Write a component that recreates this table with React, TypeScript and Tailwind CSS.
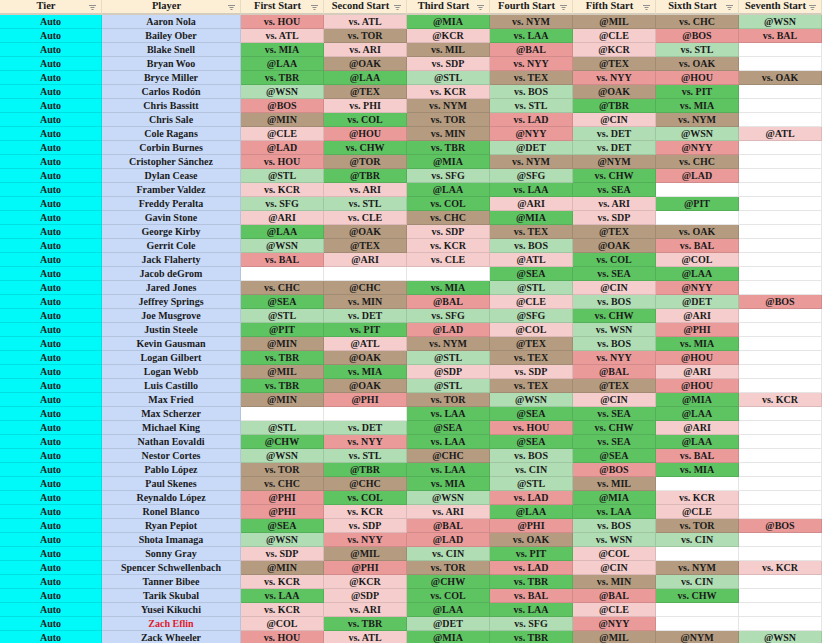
import React from 'react';

type Tone = 'G' | 'g' | 'p' | 'R' | 'B' | '-';

const tones: Record<Tone, string> = {
   G: 'bg-[#5ec462]',
   g: 'bg-[#b0ddb4]',
   p: 'bg-[#f5cdcd]',
   R: 'bg-[#eb9a9a]',
   B: 'bg-[#b59b80]',
   '-': 'bg-white',
};

// each start: "<tone><opponent>", "-" for an empty cell
const rows: [string, string[]][] = [
   ['Aaron Nola', ['Rvs. HOU', 'pvs. ATL', 'G@MIA', 'Bvs. NYM', 'B@MIL', 'Bvs. CHC', 'g@WSN']],
   ['Bailey Ober', ['pvs. ATL', 'Bvs. TOR', 'p@KCR', 'Gvs. LAA', 'p@CLE', 'R@BOS', 'Rvs. BAL']],
   ['Blake Snell', ['Gvs. MIA', 'pvs. ARI', 'Bvs. MIL', 'R@BAL', 'p@KCR', 'gvs. STL', '-']],
   ['Bryan Woo', ['G@LAA', 'B@OAK', 'pvs. SDP', 'Rvs. NYY', 'B@TEX', 'Bvs. OAK', '-']],
   ['Bryce Miller', ['Gvs. TBR', 'G@LAA', 'g@STL', 'Bvs. TEX', 'Rvs. NYY', 'R@HOU', 'Bvs. OAK']],
   ['Carlos Rodón', ['g@WSN', 'B@TEX', 'pvs. KCR', 'gvs. BOS', 'B@OAK', 'Gvs. PIT', '-']],
   ['Chris Bassitt', ['R@BOS', 'pvs. PHI', 'Bvs. NYM', 'gvs. STL', 'G@TBR', 'Gvs. MIA', '-']],
   ['Chris Sale', ['B@MIN', 'Gvs. COL', 'Bvs. TOR', 'Rvs. LAD', 'p@CIN', 'Bvs. NYM', '-']],
   ['Cole Ragans', ['p@CLE', 'R@HOU', 'Bvs. MIN', 'R@NYY', 'gvs. DET', 'g@WSN', 'p@ATL']],
   ['Corbin Burnes', ['R@LAD', 'Gvs. CHW', 'Gvs. TBR', 'g@DET', 'gvs. DET', 'R@NYY', '-']],
   ['Cristopher Sánchez', ['Rvs. HOU', 'B@TOR', 'G@MIA', 'Bvs. NYM', 'B@NYM', 'Bvs. CHC', '-']],
   ['Dylan Cease', ['g@STL', 'G@TBR', 'gvs. SFG', 'g@SFG', 'Gvs. CHW', 'R@LAD', '-']],
   ['Framber Valdez', ['pvs. KCR', 'pvs. ARI', 'G@LAA', 'Gvs. LAA', 'Gvs. SEA', '-', '-']],
   ['Freddy Peralta', ['gvs. SFG', 'gvs. STL', 'Gvs. COL', 'p@ARI', 'pvs. ARI', 'G@PIT', '-']],
   ['Gavin Stone', ['p@ARI', 'pvs. CLE', 'Bvs. CHC', 'G@MIA', 'pvs. SDP', '-', '-']],
   ['George Kirby', ['G@LAA', 'B@OAK', 'pvs. SDP', 'Bvs. TEX', 'B@TEX', 'Bvs. OAK', '-']],
   ['Gerrit Cole', ['g@WSN', 'B@TEX', 'pvs. KCR', 'gvs. BOS', 'B@OAK', 'Rvs. BAL', '-']],
   ['Jack Flaherty', ['Rvs. BAL', 'p@ARI', 'pvs. CLE', 'p@ATL', 'Gvs. COL', 'p@COL', '-']],
   ['Jacob deGrom', ['-', '-', '-', 'G@SEA', 'Gvs. SEA', 'G@LAA', '-']],
   ['Jared Jones', ['Bvs. CHC', 'B@CHC', 'Gvs. MIA', 'g@STL', 'p@CIN', 'R@NYY', '-']],
   ['Jeffrey Springs', ['G@SEA', 'Bvs. MIN', 'R@BAL', 'p@CLE', 'gvs. BOS', 'g@DET', 'R@BOS']],
   ['Joe Musgrove', ['g@STL', 'gvs. DET', 'gvs. SFG', 'g@SFG', 'Gvs. CHW', 'p@ARI', '-']],
   ['Justin Steele', ['G@PIT', 'Gvs. PIT', 'R@LAD', 'p@COL', 'gvs. WSN', 'R@PHI', '-']],
   ['Kevin Gausman', ['B@MIN', 'p@ATL', 'Bvs. NYM', 'B@TEX', 'gvs. BOS', 'Gvs. MIA', '-']],
   ['Logan Gilbert', ['Gvs. TBR', 'B@OAK', 'g@STL', 'Bvs. TEX', 'Rvs. NYY', 'R@HOU', '-']],
   ['Logan Webb', ['B@MIL', 'Gvs. MIA', 'p@SDP', 'pvs. SDP', 'R@BAL', 'p@ARI', '-']],
   ['Luis Castillo', ['Gvs. TBR', 'B@OAK', 'g@STL', 'Bvs. TEX', 'B@TEX', 'R@HOU', '-']],
   ['Max Fried', ['B@MIN', 'R@PHI', 'Bvs. TOR', 'g@WSN', 'p@CIN', 'G@MIA', 'pvs. KCR']],
   ['Max Scherzer', ['-', '-', 'Gvs. LAA', 'G@SEA', 'Gvs. SEA', 'G@LAA', '-']],
   ['Michael King', ['g@STL', 'gvs. DET', 'G@SEA', 'Rvs. HOU', 'Gvs. CHW', 'p@ARI', '-']],
   ['Nathan Eovaldi', ['G@CHW', 'Rvs. NYY', 'Gvs. LAA', 'G@SEA', 'Gvs. SEA', 'G@LAA', '-']],
   ['Nestor Cortes', ['g@WSN', 'gvs. STL', 'B@CHC', 'gvs. BOS', 'G@SEA', 'Rvs. BAL', '-']],
   ['Pablo López', ['Bvs. TOR', 'G@TBR', 'Gvs. LAA', 'gvs. CIN', 'R@BOS', 'Gvs. MIA', '-']],
   ['Paul Skenes', ['Bvs. CHC', 'B@CHC', 'Gvs. MIA', 'g@STL', 'Bvs. MIL', '-', '-']],
   ['Reynaldo López', ['R@PHI', 'Gvs. COL', 'g@WSN', 'Rvs. LAD', 'G@MIA', 'pvs. KCR', '-']],
   ['Ronel Blanco', ['R@PHI', 'pvs. KCR', 'pvs. ARI', 'G@LAA', 'Gvs. LAA', 'p@CLE', '-']],
   ['Ryan Pepiot', ['G@SEA', 'pvs. SDP', 'R@BAL', 'R@PHI', 'gvs. BOS', 'Bvs. TOR', 'R@BOS']],
   ['Shota Imanaga', ['g@WSN', 'Rvs. NYY', 'R@LAD', 'Bvs. OAK', 'gvs. WSN', 'gvs. CIN', '-']],
   ['Sonny Gray', ['pvs. SDP', 'B@MIL', 'gvs. CIN', 'Gvs. PIT', 'p@COL', '-', '-']],
   ['Spencer Schwellenbach', ['B@MIN', 'R@PHI', 'Bvs. TOR', 'Rvs. LAD', 'p@CIN', 'Bvs. NYM', 'pvs. KCR']],
   ['Tanner Bibee', ['pvs. KCR', 'p@KCR', 'G@CHW', 'Gvs. TBR', 'Bvs. MIN', 'gvs. CIN', '-']],
   ['Tarik Skubal', ['Gvs. LAA', 'p@SDP', 'Gvs. COL', 'Rvs. BAL', 'R@BAL', 'Gvs. CHW', '-']],
   ['Yusei Kikuchi', ['pvs. KCR', 'pvs. ARI', 'G@LAA', 'Gvs. LAA', 'p@CLE', '-', '-']],
   ['Zach Eflin', ['p@COL', 'Gvs. TBR', 'g@DET', 'gvs. SFG', 'R@NYY', '-', '-']],
   ['Zack Wheeler', ['Rvs. HOU', 'pvs. ATL', 'G@MIA', 'Gvs. TBR', 'B@MIL', 'B@NYM', 'g@WSN']],
];

const headers = ['Tier', 'Player', 'First Start', 'Second Start', 'Third Start', 'Fourth Start', 'Fifth Start', 'Sixth Start', 'Seventh Start'];

function FilterIcon() {
   return (
      <svg width="7" height="5" viewBox="0 0 7 5" className="absolute right-[5px] top-[5px]">
         <rect x="0" y="0" width="7" height="1" fill="#8f8f8f" />
         <rect x="1.5" y="2" width="4" height="1" fill="#8f8f8f" />
         <rect x="2.5" y="4" width="2" height="1" fill="#8f8f8f" />
      </svg>
   );
}

const cell = 'h-[14px] flex items-center justify-center border-r border-b border-black/10 leading-none whitespace-nowrap overflow-hidden';

export default function App() {
   return (
      <div
         className="w-[822px] h-[643px] overflow-hidden bg-white text-[#1b1b1b] font-bold text-[10px]"
         style={{ fontFamily: '"Liberation Serif", "DejaVu Serif", serif' }}
      >
         <div className="grid grid-cols-[102px_139px_repeat(7,83px)]">
            {headers.map((h) => (
               <div
                  key={h}
                  className="relative h-[15px] flex items-center justify-center bg-[#fcefd6] border-r border-[#e6dcc4] border-b-2 border-b-[#d4ccbc] text-[10.5px] leading-none pr-[9px] pb-[1px]"
               >
                  {h}
                  <FilterIcon />
               </div>
            ))}

            {rows.map(([name, starts]) => (
               <React.Fragment key={name}>
                  <div className={`${cell} bg-[#00fafa]`}>Auto</div>
                  <div className={`${cell} bg-[#c9daf8] ${name === 'Zach Eflin' ? 'text-[#e0192a]' : ''}`}>{name}</div>
                  {starts.map((s, i) => {
                     const tone = s[0] as Tone;
                     return (
                        <div key={i} className={`${cell} ${tones[tone]}`}>
                           {tone === '-' ? '' : s.slice(1)}
                        </div>
                     );
                  })}
               </React.Fragment>
            ))}
         </div>
      </div>
   );
}
